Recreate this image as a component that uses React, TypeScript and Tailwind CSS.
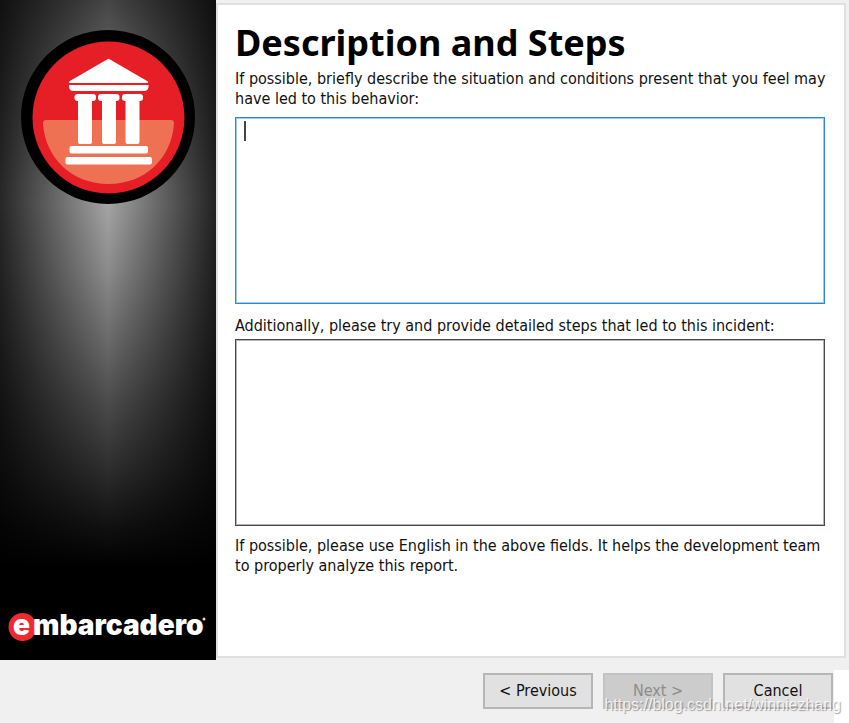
import React from 'react';

interface WizardButtonProps {
  children: React.ReactNode;
  disabled?: boolean;
}

const WizardButton: React.FC<WizardButtonProps> = ({ children, disabled = false }) => {
  return (
    <button
      type="button"
      disabled={disabled}
      className="h-9 w-[110px] border-2 border-[#b6b6b6] bg-[#e1e1e1] text-base leading-5
        disabled:border-[#c3c3c3] disabled:bg-[#cccccc] disabled:text-[#8c8c8c]"
    >
      {children}
    </button>
  );
};

const TempleLogo: React.FC = () => {
  return (
    <svg viewBox="0 0 174 174" className="h-[174px] w-[174px]" aria-hidden="true">
      <circle cx="87" cy="87" r="87" fill="#000" />
      <circle cx="87.5" cy="87.5" r="76" fill="#e61e26" />
      <path d="M25 90 H150 Q153 90 153 93 C151 128 124 154 87.5 154 C51 154 24 128 22 93 Q22 90 25 90 Z" fill="#ee7154" />
      <g fill="#fff">
        <path d="M86 29.5 Q87.5 28 89 29.5 L127 51.5 Q127.5 53 126 53 H49 Q47.5 53 48 51.5 Z" />
        <path d="M48 55 H127.5 V57 Q127 61 123 61 H52.5 Q48.5 61 48 57 Z" />
        <rect x="53.5" y="64" width="21.5" height="7" rx="3" />
        <rect x="77" y="64" width="21.5" height="7" rx="3" />
        <rect x="101" y="64" width="21" height="7" rx="3" />
        <rect x="57" y="66" width="14" height="48" rx="2" />
        <rect x="81" y="66" width="14" height="48" rx="2" />
        <rect x="104.5" y="66" width="14" height="48" rx="2" />
        <rect x="48.5" y="116" width="78.5" height="7.5" rx="2" />
        <rect x="44.5" y="127" width="86.5" height="7.5" rx="2" />
      </g>
    </svg>
  );
};

const BrandMark: React.FC = () => {
  return (
    <svg viewBox="0 0 200 40" className="h-10 w-[200px]" role="img" aria-label="embarcadero">
      <circle cx="14.5" cy="20" r="14" fill="#ed2a30" />
      <g fill="#fff" fontFamily="Inter, 'Liberation Sans', sans-serif" fontWeight="900" fontSize="28">
        <text x="5" y="28">
          e
        </text>
        <text x="25" y="28">
          mbarcadero
        </text>
      </g>
      <circle cx="196" cy="12" r="1.5" fill="#ddd" />
    </svg>
  );
};

const App: React.FC = () => {
  return (
    <div className="relative flex min-h-screen flex-col bg-[#f0f0f0] font-['DejaVu_Sans_Condensed','DejaVu_Sans',sans-serif] text-base text-[#111]">
      <div className="flex">
        <aside
          className="flex w-[216px] shrink-0 flex-col items-center justify-between pt-[30px] pb-[13px]
            bg-[linear-gradient(180deg,rgba(0,0,0,0.58)_0%,rgba(0,0,0,0.2)_19%,rgba(0,0,0,0.02)_28%,rgba(0,0,0,0)_31%,rgba(0,0,0,0.15)_41%,rgba(0,0,0,0.36)_52%,rgba(0,0,0,0.54)_61%,rgba(0,0,0,0.72)_71%,rgba(0,0,0,0.9)_80%,#000_86%),linear-gradient(90deg,#262626_0%,#a4a4a4_50%,#222222_100%)]"
        >
          <TempleLogo />
          <BrandMark />
        </aside>

        <div className="min-w-0 grow pt-[3px] pr-[3px] pb-[2px]">
          <main className="border-2 border-[#e0e0e0] bg-white px-[17px] pt-4 pb-20">
            <h1 className="font-['Noto_Sans','Open_Sans',sans-serif] text-4xl leading-[44px] font-bold text-black">
              Description and Steps
            </h1>
            <label htmlFor="situation" className="mt-1 block leading-5">
              If possible, briefly describe the situation and conditions present that you feel may have led to this
              behavior:
            </label>
            <div className="relative mt-2 mr-0.5">
              <textarea
                id="situation"
                className="block h-[187px] w-full resize-none border border-[#2b88d8] bg-white px-2 py-1 shadow-[inset_0_0_0_1px_#9fcbef] outline-none"
              />
              <span className="pointer-events-none absolute top-1 left-[9px] h-5 w-0.5 bg-[#444]" />
            </div>
            <label htmlFor="steps" className="mt-3 block leading-5">
              Additionally, please try and provide detailed steps that led to this incident:
            </label>
            <div className="mt-[3px] mr-0.5">
              <textarea
                id="steps"
                className="block h-[187px] w-full resize-none border border-[#484848] bg-white px-2 py-1 shadow-[inset_0_0_0_1px_#b5b5b5] outline-none"
              />
            </div>
            <p className="mt-[10px] leading-5">
              If possible, please use English in the above fields. It helps the development team to properly analyze
              this report.
            </p>
          </main>
        </div>
      </div>

      <footer className="flex justify-end gap-[10px] pt-[13px] pr-4 pb-[14px]">
        <WizardButton>&lt; Previous</WizardButton>
        <WizardButton disabled>Next &gt;</WizardButton>
        <WizardButton>Cancel</WizardButton>
      </footer>

      <div className="absolute right-0 bottom-0 h-[53px] w-[15px] bg-white" />
      <span className="pointer-events-none absolute right-2 bottom-2 font-['Liberation_Sans',Arial,sans-serif] text-base leading-5 text-white/80 [text-shadow:1px_1px_1px_rgba(0,0,0,0.35)]">
        https://blog.csdn.net/winniezhang
      </span>
    </div>
  );
};

export default App;
